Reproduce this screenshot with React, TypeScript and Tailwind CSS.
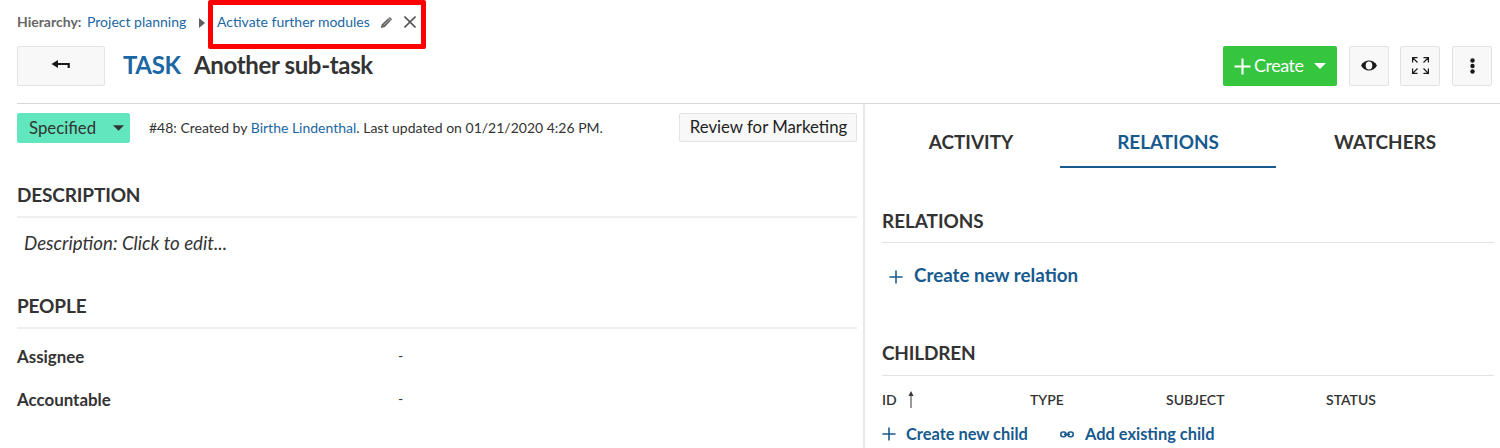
import type { ReactNode } from "react";

const Caret = ({ className }: { className: string }) => (
  <svg viewBox="0 0 12 6" className={className} fill="currentColor">
    <path d="M0 0h12L6 6z" />
  </svg>
);

const Plus = ({ className, weight = 1.8 }: { className: string; weight?: number }) => (
  <svg viewBox="0 0 16 16" className={className} stroke="currentColor" strokeWidth={weight}>
    <path d="M8 0.5v15M0.5 8h15" />
  </svg>
);

const ToolButton = ({ children }: { children: ReactNode }) => (
  <button className="flex h-10 w-10 items-center justify-center rounded-xs border border-[#e3e3e3] bg-[#f8f8f8] text-[#1a1a1a]">
    {children}
  </button>
);

function Breadcrumb() {
  return (
    <nav className="flex h-[45px] items-center pl-[17px] text-[14px] leading-5 text-[#1a67a3]">
      <span className="mb-[2px] w-[70px] font-bold text-[#666]">Hierarchy:</span>
      <a className="mb-[2px] w-[112px]">Project planning</a>
      <svg viewBox="0 0 6 10" className="h-[10px] w-[6px] text-[#5f5f5f]" fill="currentColor">
        <path d="M0 0l6 5-6 5z" />
      </svg>
      <div className="mt-[3px] ml-[3px] flex h-[49px] w-[218px] shrink-0 items-center rounded-xs border-5 border-[#ff0000] pb-1 pl-1">
        <a className="w-[163px]">Activate further modules</a>
        <svg viewBox="0 0 14 14" className="h-[13px] w-[13px]">
          <path d="M.8 13L2 8.8 8.8 2.4l2.8 2.8L5 12z" fill="#666" />
          <path d="M9.7 1.6q.8-.7 1.5 0l1.3 1.3q.7.8 0 1.5l-.5.5-2.8-2.8z" fill="#666" />
          <path d="M3.9 10l5.8-5.600" stroke="#ccc" strokeWidth=".7" />
        </svg>
        <svg viewBox="0 0 12 12" className="ml-[11px] h-3 w-3" stroke="#555" strokeWidth="1.6">
          <path d="M.5.5l11 11M11.5.5l-11 11" />
        </svg>
      </div>
    </nav>
  );
}

function TitleBar() {
  return (
    <div className="flex h-[58px] items-start pt-[1px] pr-2 pl-[17px]">
      <button className="flex h-10 w-[88px] items-center justify-center rounded-xs border border-[#e3e3e3] bg-[#f8f8f8]">
        <svg viewBox="0 0 20 10" className="mb-[3px] h-[10px] w-5">
          <path d="M0.5 4L7 0v8z" fill="#1a1a1a" />
          <path d="M6 4h11.700v4" fill="none" stroke="#1a1a1a" strokeWidth="2.200" />
        </svg>
      </button>
      <h1 className="flex h-[38px] items-center pl-[18px] text-[24px] font-bold tracking-[-0.35px] text-[#333]">
        <span className="w-[71px] text-[#1a67a3]">TASK</span>
        <span>Another sub-task</span>
      </h1>
      <div className="ml-auto flex">
        <button className="flex h-10 w-[114px] items-center rounded-xs bg-[#35c53f] pl-[11px] text-[18px] text-white">
          <Plus className="h-[17px] w-[17px] shrink-0" weight={2} />
          <span className="w-[60px] shrink-0 pb-[2px] pl-[3px] text-left tracking-[-0.5px]">Create</span>
          <Caret className="ml-[3px] h-[6px] w-[12px]" />
        </button>
        <div className="flex gap-[11px] pl-3">
          <ToolButton>
            <svg viewBox="0 0 16 11" className="mb-px h-[11px] w-4">
              <path d="M0 5.5C3.5-1.3 12.5-1.3 16 5.5 12.5 12.3 3.5 12.3 0 5.5z" fill="currentColor" />
              <ellipse cx="8" cy="5.5" rx="3.3" ry="4" fill="#f8f8f8" />
            </svg>
          </ToolButton>
          <ToolButton>
            <svg viewBox="0 0 17 17" className="mb-px h-[17px] w-[17px]" fill="none" stroke="currentColor" strokeWidth="1.2">
              <path d="M.6 5.500V.6H5.500M.6.6l4.900 4.900M11.500 .6h4.900V5.500M16.400.6l-4.900 4.900M.6 11.500v4.900H5.500M.6 16.400l4.900-4.900M11.500 16.400h4.900V11.500M16.400 16.400l-4.900-4.900" />
            </svg>
          </ToolButton>
          <div className="pl-px">
            <ToolButton>
              <svg viewBox="0 0 5 16" className="mb-px h-4 w-[5px]" fill="currentColor">
                <circle cx="2.5" cy="2.5" r="2.2" />
                <circle cx="2.5" cy="8" r="2.2" />
                <circle cx="2.5" cy="13.5" r="2.2" />
              </svg>
            </ToolButton>
          </div>
        </div>
      </div>
    </div>
  );
}

function Details() {
  return (
    <main className="w-[865px] shrink-0 border-r-2 border-[#e8e8e8] pt-[9px] pr-[6px] pl-[17px]">
      <div className="flex h-[30px] items-start">
        <button className="flex h-[30px] w-[113px] items-center rounded-xs bg-[#62e6bd] pl-3 text-[16.8px] text-[#333]">
          <span className="w-[84px] text-left">Specified</span>
          <Caret className="h-[6px] w-[11px]" />
        </button>
        <p className="pl-[19px] text-[14px] leading-[30px] text-[#333]">
          #48: Created by <a className="text-[#1a67a3]">Birthe Lindenthal</a>. Last updated on 01/21/2020 4:26 PM.
        </p>
        <button className="ml-auto flex h-[29px] w-[178px] items-center justify-center rounded-xs border border-[#e3e3e3] bg-[#f8f8f8] pb-[2px] pl-px text-[16.8px] text-[#222]">
          Review for Marketing
        </button>
      </div>
      <h2 className="mt-[35px] h-[40px] border-b-2 border-[#efefef] pt-[5px] text-[19px] leading-6 font-bold tracking-[-0.15px] text-[#333]">DESCRIPTION</h2>
      <p className="h-[71px] pt-[11px] pl-[7px] text-[18.7px] leading-7 text-[#333] italic">Description: Click to edit...</p>
      <h2 className="h-[40px] border-b-2 border-[#efefef] pt-[5px] text-[19px] leading-6 font-bold tracking-[-0.15px] text-[#333]">PEOPLE</h2>
      <dl className="grid grid-cols-[381px_1fr] gap-y-[15px] pt-[14px] text-[16.9px] leading-7 text-[#333]">
        <dt className="font-bold">Assignee</dt>
        <dd className="-mt-px text-[14px]">-</dd>
        <dt className="font-bold">Accountable</dt>
        <dd className="-mt-px text-[14px]">-</dd>
      </dl>
    </main>
  );
}

function Relations() {
  return (
    <aside className="min-w-0 grow pr-[6px] pl-[17px] text-[#333]">
      <div className="flex h-[64px] text-center text-[18.9px] leading-6 font-bold">
        <span className="w-[178px] pt-[26px]">ACTIVITY</span>
        <span className="w-[216px] border-b-2 border-[#175a8e] pt-[26px] text-[#175a8e]">RELATIONS</span>
        <span className="w-[218px] pt-[26px]">WATCHERS</span>
      </div>
      <h2 className="mt-[36px] h-[39px] border-b border-[#e3e3e3] pt-[5px] text-[18.9px] leading-6 font-bold">RELATIONS</h2>
      <a className="flex h-[65px] items-center pl-[7px] text-[18.8px] font-bold text-[#175a8e]">
        <Plus className="mt-[2px] h-[14px] w-[14px]" />
        <span className="pl-[11px]">Create new relation</span>
      </a>
      <h2 className="mt-[29px] h-[39px] border-b border-[#e3e3e3] pt-[4px] text-[19px] leading-6 font-bold tracking-[-0.2px]">CHILDREN</h2>
      <div className="flex h-[48px] items-center pb-[2px] text-[14px] font-semibold">
        <span className="flex w-[148px] items-center">
          ID
          <svg viewBox="0 0 6 17" className="ml-[11px] h-[17px] w-[6px]">
            <path d="M3 0l2.5 5h-5z" fill="#333" />
            <path d="M3 4v13" stroke="#555" strokeWidth="1.2" />
          </svg>
        </span>
        <span className="w-[136px]">TYPE</span>
        <span className="w-[160px]">SUBJECT</span>
        <span>STATUS</span>
      </div>
      <div className="flex h-[20px] items-center text-[16.4px] leading-5 font-bold text-[#175a8e]">
        <Plus className="h-[14px] w-[14px]" />
        <span className="w-[164px] pl-[10px]">Create new child</span>
        <svg viewBox="0 0 14 7" className="mt-px h-[7px] w-[14px]" fill="none" stroke="currentColor" strokeWidth="1.6">
          <rect x=".8" y="1" width="5.2" height="4.8" rx="2.2" />
          <rect x="8" y="1" width="5.2" height="4.8" rx="2.2" />
          <path d="M4 3.4h6" />
        </svg>
        <span className="pl-[11px]">Add existing child</span>
      </div>
    </aside>
  );
}

export default function App() {
  return (
    <div className="flex h-[448px] w-[1500px] flex-col overflow-hidden bg-white font-['Lato',sans-serif]">
      <header className="h-[104px] shrink-0">
        <Breadcrumb />
        <TitleBar />
        <div className="ml-[17px] h-px bg-[#d7d7d7]" />
      </header>
      <div className="flex min-h-0 grow">
        <Details />
        <Relations />
      </div>
    </div>
  );
}
